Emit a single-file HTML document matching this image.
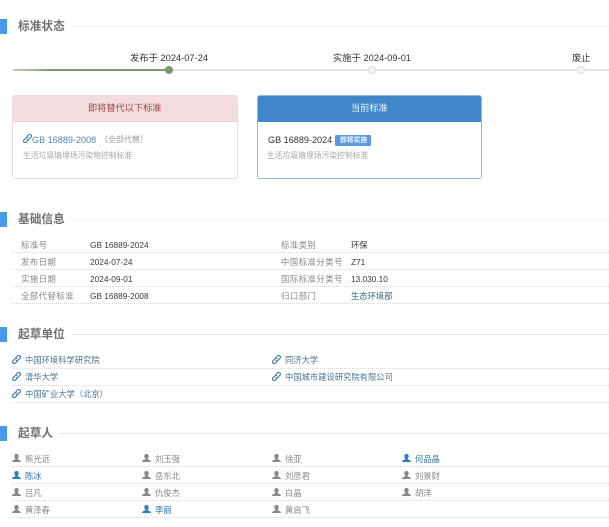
<!DOCTYPE html>
<html><head><meta charset="utf-8"><style>
html,body{margin:0;padding:0;background:#fff}
body{width:609px;height:527px;overflow:hidden;position:relative;font-family:"Liberation Sans","Noto Sans CJK SC",sans-serif;}
#w{position:absolute;left:0;top:0;width:609px;height:527px;filter:blur(.3px)}
.t{position:absolute;white-space:nowrap;line-height:12px}
.b{position:absolute;}
.bar{position:absolute;left:0;width:7px;height:15px;background:#4a98e8}
.h{position:absolute;left:18px;font-size:11.7px;font-weight:bold;color:#707070;line-height:16px;white-space:nowrap}
.hl{position:absolute;right:0;height:1px;background:#eee}
.dash{position:absolute;height:0;border-top:1px dotted #d8d8d8}
.l{font-size:8.3px;color:#888;letter-spacing:.55px}
.v{font-size:8.3px;color:#3a3a3a}
.u{font-size:8.3px;color:#4a7394}
.n{font-size:8.3px;color:#888}
.nb{color:#2f74ad}
svg{position:absolute}
</style></head><body>
<svg width="0" height="0" style="position:absolute"><defs>
<symbol id="p" viewBox="0 0 9 8"><path d="M4.5 0C3 0 2.3 1 2.3 2.3 2.3 3.5 3 4.4 3.4 4.7L3.3 5.2C2.2 5.7.2 6 0 8H9C8.8 6 6.8 5.7 5.7 5.2L5.6 4.7C6 4.4 6.7 3.5 6.7 2.3 6.7 1 6 0 4.5 0Z" fill="currentColor"/></symbol>
<symbol id="k" viewBox="0 0 9 9"><path d="M3.7 2.9 5.4 1C6.1.3 7.3.2 8 .9 8.7 1.6 8.6 2.6 7.9 3.3L6 5.2C5.3 5.9 4.4 5.8 3.9 5.1M5.3 6.1 3.6 8C2.9 8.7 1.7 8.8 1 8.1 .3 7.4.4 6.4 1.1 5.7L3 3.8C3.7 3.1 4.6 3.2 5.1 3.9" fill="none" stroke="currentColor" stroke-width="1.2"/></symbol>
</defs></svg>
<div id="w">
<div class="bar" style="top:19px"></div>
<div class="h" style="top:19px">标准状态</div>
<div class="hl" style="left:71px;top:26px;background:#f3f3f3"></div>

<div class="t" style="left:130px;top:52px;font-size:9.3px;color:#333">发布于 2024-07-24</div>
<div class="t" style="left:333px;top:52px;font-size:9.3px;color:#333">实施于 2024-09-01</div>
<div class="t" style="left:572px;top:52px;font-size:9.3px;color:#333">废止</div>
<div class="b" style="left:13px;top:69px;width:596px;height:2px;background:#e4e4e4"></div>
<div class="b" style="left:13px;top:69px;width:156px;height:2px;background:linear-gradient(90deg,#c4d0bd,#7b9a6c 25%)"></div>
<div class="b" style="left:165px;top:66px;width:8px;height:8px;border-radius:50%;background:#7b9a6c"></div>
<div class="b" style="left:368px;top:66px;width:6px;height:6px;border-radius:50%;background:#f5f5f5;border:1px solid #ddd"></div>
<div class="b" style="left:577px;top:66px;width:6px;height:6px;border-radius:50%;background:#f5f5f5;border:1px solid #ddd"></div>

<div class="b" style="left:12px;top:95px;width:224px;height:82px;border:1px solid #f0dadd;border-radius:3px;overflow:hidden;background:#fff">
<div style="height:25px;background:#f2dcde;border-bottom:1px solid #ecd0d3"></div></div>
<div class="t" style="left:88px;top:102px;font-size:9.2px;color:#a04643">即将替代以下标准</div>
<svg style="left:23px;top:134px;color:#4f86b8" width="9" height="9"><use href="#k"/></svg>
<div class="t" style="left:32px;top:134px;font-size:9.1px;color:#4f86b0">GB 16889-2008</div>
<div class="t" style="left:100px;top:134px;font-size:8px;color:#999">（全部代替）</div>
<div class="t" style="left:23px;top:150px;font-size:7.8px;color:#a5a5a5">生活垃圾填埋场污染物控制标准</div>

<div class="b" style="left:257px;top:95px;width:223px;height:82px;border:1px solid #8fbcd4;border-radius:3px;overflow:hidden;background:#fff">
<div style="height:26px;background:#3f87c8"></div></div>
<div class="t" style="left:351px;top:102px;font-size:9.2px;color:#eef5fb">当前标准</div>
<div class="t" style="left:268px;top:134px;font-size:9.1px;color:#333">GB 16889-2024</div>
<div class="b" style="left:335px;top:135px;width:36px;height:11px;background:#5b9ae0;border-radius:1px"></div>
<div class="t" style="left:340px;top:135px;font-size:6.8px;font-weight:bold;color:#eef5ff">即将实施</div>
<div class="t" style="left:267px;top:150px;font-size:7.8px;color:#a5a5a5">生活垃圾填埋场污染控制标准</div>

<div class="bar" style="top:212px"></div>
<div class="h" style="top:212px">基础信息</div>
<div class="hl" style="left:71px;top:219px;background:#f6f6f6"></div>

<div class="t l" style="left:21px;top:239px">标准号</div><div class="t v" style="left:90px;top:239px">GB 16889-2024</div>
<div class="t l" style="left:281px;top:239px">标准类别</div><div class="t v" style="left:351px;top:239px">环保</div>
<div class="dash" style="left:12px;right:0;top:252px"></div>
<div class="t l" style="left:21px;top:256px">发布日期</div><div class="t v" style="left:90px;top:256px">2024-07-24</div>
<div class="t l" style="left:281px;top:256px">中国标准分类号</div><div class="t v" style="left:351px;top:256px">Z71</div>
<div class="dash" style="left:12px;right:0;top:269px"></div>
<div class="t l" style="left:21px;top:273px">实施日期</div><div class="t v" style="left:90px;top:273px">2024-09-01</div>
<div class="t l" style="left:281px;top:273px">国际标准分类号</div><div class="t v" style="left:351px;top:273px">13.030.10</div>
<div class="dash" style="left:12px;right:0;top:286px"></div>
<div class="t l" style="left:21px;top:290px">全部代替标准</div><div class="t v" style="left:90px;top:290px">GB 16889-2008</div>
<div class="t l" style="left:281px;top:290px">归口部门</div><div class="t v" style="left:351px;top:290px;color:#2f6688">生态环境部</div>
<div class="dash" style="left:12px;right:0;top:303px"></div>

<div class="bar" style="top:327px"></div>
<div class="h" style="top:327px">起草单位</div>
<div class="hl" style="left:71px;top:334px;background:#e6e6e6"></div>

<svg style="left:12px;top:355px;color:#4f7fa6" width="9" height="9"><use href="#k"/></svg>
<div class="t u" style="left:25px;top:354px">中国环境科学研究院</div>
<svg style="left:272px;top:355px;color:#4f7fa6" width="9" height="9"><use href="#k"/></svg>
<div class="t u" style="left:285px;top:354px">同济大学</div>
<div class="dash" style="left:12px;right:0;top:368px"></div>
<svg style="left:12px;top:372px;color:#4f7fa6" width="9" height="9"><use href="#k"/></svg>
<div class="t u" style="left:25px;top:371px">清华大学</div>
<svg style="left:272px;top:372px;color:#4f7fa6" width="9" height="9"><use href="#k"/></svg>
<div class="t u" style="left:285px;top:371px">中国城市建设研究院有限公司</div>
<div class="dash" style="left:12px;right:0;top:385px"></div>
<svg style="left:12px;top:389px;color:#4f7fa6" width="9" height="9"><use href="#k"/></svg>
<div class="t u" style="left:25px;top:388px">中国矿业大学（北京）</div>
<div class="dash" style="left:12px;right:0;top:402px"></div>

<div class="bar" style="top:426px"></div>
<div class="h" style="top:426px">起草人</div>
<div class="hl" style="left:59px;top:433px;background:#eaeaea"></div>

<svg style="left:12px;top:454px;color:#888" width="9" height="8"><use href="#p"/></svg><div class="t n" style="left:25px;top:453px">熊光远</div>
<svg style="left:142px;top:454px;color:#888" width="9" height="8"><use href="#p"/></svg><div class="t n" style="left:155px;top:453px">刘玉强</div>
<svg style="left:272px;top:454px;color:#888" width="9" height="8"><use href="#p"/></svg><div class="t n" style="left:285px;top:453px">徐亚</div>
<svg style="left:402px;top:454px;color:#2f7cc0" width="9" height="8"><use href="#p"/></svg><div class="t n nb" style="left:415px;top:453px">何品晶</div>
<div class="dash" style="left:12px;right:0;top:466px"></div>
<svg style="left:12px;top:471px;color:#2f7cc0" width="9" height="8"><use href="#p"/></svg><div class="t n nb" style="left:25px;top:470px">陈冰</div>
<svg style="left:142px;top:471px;color:#888" width="9" height="8"><use href="#p"/></svg><div class="t n" style="left:155px;top:470px">岳东北</div>
<svg style="left:272px;top:471px;color:#888" width="9" height="8"><use href="#p"/></svg><div class="t n" style="left:285px;top:470px">刘彦君</div>
<svg style="left:402px;top:471px;color:#888" width="9" height="8"><use href="#p"/></svg><div class="t n" style="left:415px;top:470px">刘景财</div>
<div class="dash" style="left:12px;right:0;top:483px"></div>
<svg style="left:12px;top:488px;color:#888" width="9" height="8"><use href="#p"/></svg><div class="t n" style="left:25px;top:487px">吕凡</div>
<svg style="left:142px;top:488px;color:#888" width="9" height="8"><use href="#p"/></svg><div class="t n" style="left:155px;top:487px">仇俊杰</div>
<svg style="left:272px;top:488px;color:#888" width="9" height="8"><use href="#p"/></svg><div class="t n" style="left:285px;top:487px">白晶</div>
<svg style="left:402px;top:488px;color:#888" width="9" height="8"><use href="#p"/></svg><div class="t n" style="left:415px;top:487px">胡洋</div>
<div class="dash" style="left:12px;right:0;top:500px"></div>
<svg style="left:12px;top:505px;color:#888" width="9" height="8"><use href="#p"/></svg><div class="t n" style="left:25px;top:504px">黄泽春</div>
<svg style="left:142px;top:505px;color:#2f7cc0" width="9" height="8"><use href="#p"/></svg><div class="t n nb" style="left:155px;top:504px">李丽</div>
<svg style="left:272px;top:505px;color:#888" width="9" height="8"><use href="#p"/></svg><div class="t n" style="left:285px;top:504px">黄启飞</div>
<div class="dash" style="left:12px;right:0;top:517px"></div>
</div>
</body></html>
